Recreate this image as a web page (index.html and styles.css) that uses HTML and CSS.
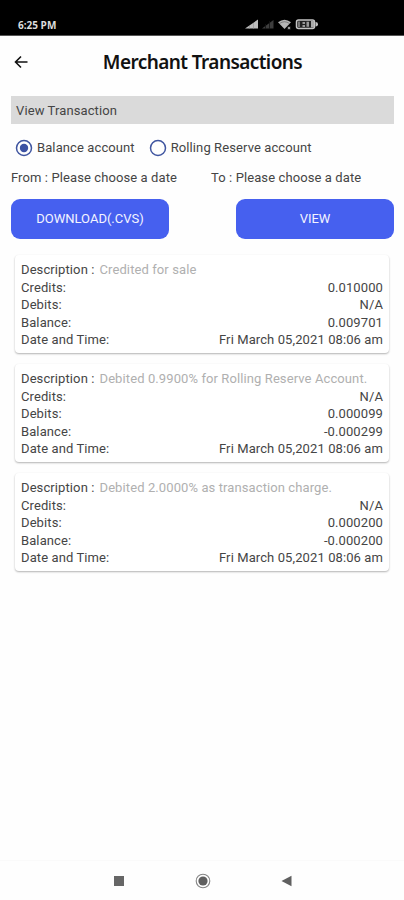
FILE: index.html
```html
<!DOCTYPE html>
<html lang="en">
<head>
<meta charset="utf-8">
<meta name="viewport" content="width=device-width, initial-scale=1">
<title>Merchant Transactions</title>
<link rel="stylesheet" href="styles.css">
</head>
<body>
<div class="status">
  <span class="clock">6:25 PM</span>
  <svg class="status-icons" width="74" height="12" viewBox="0 0 74 12">
    <path d="M0 10.5 13 1.5v9z" fill="#bdbdbd"/>
    <path d="M4.500 8v3M8.500 5v6" stroke="#888" stroke-width=".5"/>
    <path d="M17 10.500 28.500 2v8.500z" fill="#3d3d3d"/>
    <path d="M20.500 6v5M24.500 3v8" stroke="#111" stroke-width=".8"/>
    <path d="M33 4.300Q39.500-.8 46 4.300L39.500 11z" fill="#b5b5b5"/>
    <path d="M34.500 5.500q5-3.500 10 0" fill="none" stroke="#555" stroke-width=".6"/>
    <path d="M42.500 8.500h3v3h-3z" fill="#999" stroke="#000" stroke-width=".6"/>
    <rect x="51.500" y="2" width="18" height="8.500" rx="2" fill="#222" stroke="#c4c4c4" stroke-width="1.500"/>
    <rect x="53" y="3.500" width="2" height="5.500" fill="#777"/>
    <path d="M57.500 4h2.500v2h-2.500zM57.500 7h2.500v2h-2.500zM61.500 3.800h2.500v5h-2.500z" fill="#999"/>
    <path d="M66 3h3v6.500h-3z" fill="#aaa"/>
    <path d="M70.500 4q2.500 0 2.500 2.300t-2.500 2.300z" fill="#c4c4c4"/>
  </svg>
</div>
<header class="header">
  <svg class="back" width="14" height="14" viewBox="0 0 14 14"><path d="M7 1.500 1.500 7 7 12.500M1.500 7H13.500" fill="none" stroke="#111" stroke-width="1.600"/></svg>
  <h1 class="title">Merchant Transactions</h1>
</header>
<main class="main">
  <div class="section">View Transaction</div>
  <div class="radios">
    <div class="radio"><svg width="18" height="18" viewBox="0 0 18 18"><circle cx="9" cy="9" r="7.500" fill="none" stroke="#3f55a0" stroke-width="1.500"/><circle cx="9" cy="9" r="4.200" fill="#3c52a3"/></svg><span>Balance account</span></div>
    <div class="radio"><svg width="18" height="18" viewBox="0 0 18 18"><circle cx="9" cy="9" r="7.500" fill="none" stroke="#3f55a0" stroke-width="1.500"/></svg><span>Rolling Reserve account</span></div>
  </div>
  <div class="dates"><span>From : Please choose a date</span><span>To : Please choose a date</span></div>
  <div class="buttons"><button class="btn">DOWNLOAD(.CVS)</button><button class="btn">VIEW</button></div>
  <div class="cards">
    <section class="card">
      <div class="row"><span>Description :</span><span class="note">Credited for sale</span></div>
      <div class="row"><span>Credits:</span><span class="value">0.010000</span></div>
      <div class="row"><span>Debits:</span><span class="value">N/A</span></div>
      <div class="row"><span>Balance:</span><span class="value">0.009701</span></div>
      <div class="row"><span>Date and Time:</span><span class="value">Fri March 05,2021 08:06 am</span></div>
    </section>
    <section class="card">
      <div class="row"><span>Description :</span><span class="note">Debited 0.9900% for Rolling Reserve Account.</span></div>
      <div class="row"><span>Credits:</span><span class="value">N/A</span></div>
      <div class="row"><span>Debits:</span><span class="value">0.000099</span></div>
      <div class="row"><span>Balance:</span><span class="value">-0.000299</span></div>
      <div class="row"><span>Date and Time:</span><span class="value">Fri March 05,2021 08:06 am</span></div>
    </section>
    <section class="card">
      <div class="row"><span>Description :</span><span class="note">Debited 2.0000% as transaction charge.</span></div>
      <div class="row"><span>Credits:</span><span class="value">N/A</span></div>
      <div class="row"><span>Debits:</span><span class="value">0.000200</span></div>
      <div class="row"><span>Balance:</span><span class="value">-0.000200</span></div>
      <div class="row"><span>Date and Time:</span><span class="value">Fri March 05,2021 08:06 am</span></div>
    </section>
  </div>
</main>
<nav class="nav">
  <svg width="16" height="16" viewBox="0 0 16 16"><rect x="3" y="3" width="10" height="10" fill="#666"/></svg>
  <svg width="16" height="16" viewBox="0 0 16 16"><circle cx="8" cy="8" r="6.800" fill="none" stroke="#858585" stroke-width="1.100"/><circle cx="8" cy="8" r="4.600" fill="#5f5f5f"/></svg>
  <svg width="16" height="16" viewBox="0 0 16 16"><path d="M2.500 8 12.500 2.800v10.400z" fill="#606060"/></svg>
</nav>
</body>
</html>
```
FILE: styles.css
```css
* { box-sizing: border-box; }
body {
  margin: 0;
  height: 900px;
  display: flex;
  flex-direction: column;
  overflow: hidden;
  background: #fefefe;
  color: #454545;
  font: 13px/18px Roboto, sans-serif;
  letter-spacing: .1px;
  white-space: nowrap;
}
.status {
  height: 36px;
  flex: none;
  background: #000;
  border-bottom: 1px solid #555;
  display: flex;
  justify-content: space-between;
  padding: 18px 85px 0 18px;
}
.clock { color: #ddd; font: 700 10px/14px "Open Sans", sans-serif; letter-spacing: 0; }
.status-icons { flex: none; }
.header {
  height: 60px;
  flex: none;
  display: grid;
  grid-template-columns: 14px 1fr 14px;
  align-items: center;
  padding: 0 14px 9px;
}
.title {
  margin: 0;
  padding: 1px 0 0 1px;
  text-align: center;
  color: #111;
  font: 600 19px/28px "Noto Sans", sans-serif;
  letter-spacing: -.58px;
}
.main { flex: 1; padding: 0 10px 0 11px; }
.section { height: 28px; background: #dadada; padding-left: 5px; line-height: 29px; }
.radios { display: flex; gap: 14px; margin-top: 14px; padding-left: 4px; }
.radio { display: flex; align-items: center; gap: 4px; height: 19px; }
.dates { display: grid; grid-template-columns: 200px 1fr; margin-top: 12px; line-height: 18px; }
.buttons { display: flex; justify-content: space-between; margin-top: 12px; }
.btn {
  width: 158px;
  height: 40px;
  border: 0;
  border-radius: 9px;
  background: #4660ef;
  color: #f3f4ff;
  font: 13px/40px Roboto, sans-serif;
  padding: 0;
}
.cards { display: flex; flex-direction: column; gap: 11px; padding: 16px 5px 0 4px; }
.card {
  height: 98px;
  padding: 6px 6px 0;
  border-radius: 4px;
  background: #fff;
  box-shadow: 0 1px 2px rgba(0, 0, 0, .3);
}
.row { display: flex; height: 17.6px; line-height: 18px; }
.note { margin-left: 5px; color: #b0b0b0; }
.value { margin-left: auto; }
.nav {
  height: 40px;
  flex: none;
  display: flex;
  justify-content: center;
  gap: 68px;
  padding: 12px 0 0 1px;
  border-top: 1px solid #fafafa;
}
```
